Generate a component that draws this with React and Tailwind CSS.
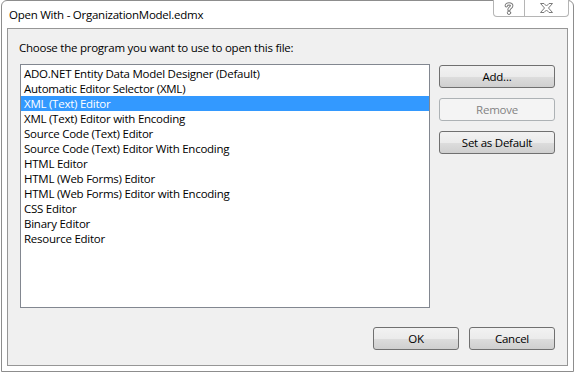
import React from "react";

// Classic "Open With" dialog

const programs = [
  "ADO.NET Entity Data Model Designer (Default)",
  "Automatic Editor Selector (XML)",
  "XML (Text) Editor",
  "XML (Text) Editor with Encoding",
  "Source Code (Text) Editor",
  "Source Code (Text) Editor With Encoding",
  "HTML Editor",
  "HTML (Web Forms) Editor",
  "HTML (Web Forms) Editor with Encoding",
  "CSS Editor",
  "Binary Editor",
  "Resource Editor",
];

const WinButton = ({ children, disabled, className = "" }) => (
  <button
    disabled={disabled}
    className={`h-[23px] rounded-[3px] border text-[11.5px] tracking-[-0.25px] leading-none ${
      disabled
        ? "border-[#adb2b5] bg-[#f4f4f4] text-[#838383]"
        : "border-[#707070] bg-[linear-gradient(#f2f2f2_0%,#ebebeb_50%,#dddddd_51%,#cfcfcf_100%)] text-black"
    } ${className}`}
  >
    {children}
  </button>
);

export default function App() {
  const selected = 2;

  return (
    <div className="w-[576px] h-[373px] bg-white overflow-hidden font-['Open_Sans',sans-serif] text-black">
      {/* Window frame */}
      <div className="ml-[1px] w-[573px] h-[372px] border border-[#8d8d8d] rounded-t-[6px] bg-white flex flex-col">
        {/* Title bar */}
        <div className="h-[27px] flex items-start justify-between pl-[7px] pr-[4px]">
          <span className="mt-[6px] text-[11.5px] leading-[15px] tracking-[-0.25px]">Open With - OrganizationModel.edmx</span>
          <div className="flex h-[17px] -mt-[1px] border border-t-0 border-[#b5b5b5] rounded-b-[4px] bg-white">
            <div className="w-[31px] flex items-center justify-center border-r border-[#b5b5b5]">
              <svg width="10" height="13" viewBox="0 0 10 13" fill="none" strokeLinecap="round">
                <path d="M2.3 3.8 C2.3 1.2 7.7 1.2 7.7 3.8 C7.7 5.6 5 5.6 5 7.8" stroke="#7a7a7a" strokeWidth="3.4" />
                <path d="M2.3 3.8 C2.3 1.2 7.7 1.2 7.7 3.8 C7.7 5.6 5 5.6 5 7.8" stroke="#fff" strokeWidth="1.4" />
                <circle cx="5" cy="10.8" r="1.7" fill="#fff" stroke="#7a7a7a" strokeWidth="1" />
              </svg>
            </div>
            <div className="w-[43px] flex items-center justify-center">
              <svg width="13" height="10" viewBox="0 0 13 10">
                <path
                  d="M0.5 0.5 H4 L6.5 3 L9 0.5 H12.5 L8.5 5 L12.5 9.5 H9 L6.5 7 L4 9.5 H0.5 L4.5 5 Z"
                  fill="#fff"
                  stroke="#7a7a7a"
                  strokeWidth="1"
                />
              </svg>
            </div>
          </div>
        </div>

        {/* Client area */}
        <div className="ml-[5px] w-[561px] h-[338px] border border-[#969696] bg-[#f0f0f0] flex flex-col pl-[12px] pr-[12px]">
          <div className="mt-[11px] ml-[-1px] text-[11.5px] leading-[15px] tracking-[-0.25px]">
            Choose the program you want to use to open this file:
          </div>

          <div className="mt-[9px] flex items-start gap-[9px]">
            {/* List box */}
            <div className="w-[411px] h-[244px] border border-[#828790] bg-white pt-[1px]">
              {programs.map((p, i) => (
                <div
                  key={p}
                  className={`h-[15px] pl-[3px] text-[11.5px] leading-[15px] tracking-[-0.25px] whitespace-nowrap ${
                    i === selected ? "bg-[#3399ff] text-white" : ""
                  }`}
                >
                  {p}
                </div>
              ))}
            </div>

            {/* Side buttons */}
            <div className="mt-[1px] flex flex-col gap-[10px]">
              <WinButton className="w-[116px]">Add...</WinButton>
              <WinButton className="w-[116px]" disabled>
                Remove
              </WinButton>
              <WinButton className="w-[116px]">Set as Default</WinButton>
            </div>
          </div>

          {/* Bottom buttons */}
          <div className="mt-[19px] flex justify-end gap-[10px]">
            <WinButton className="w-[86px]">OK</WinButton>
            <WinButton className="w-[86px]">Cancel</WinButton>
          </div>
        </div>
      </div>
    </div>
  );
}
